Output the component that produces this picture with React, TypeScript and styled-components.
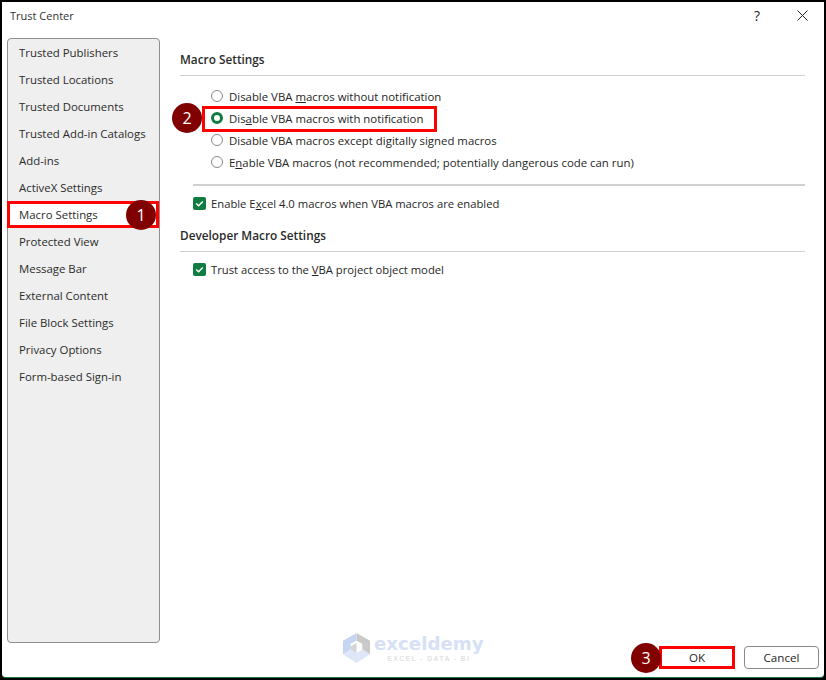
import React from "react";
import styled, { createGlobalStyle } from "styled-components";

const Global = createGlobalStyle`
  html, body { margin: 0; padding: 0; background: #fff; }
  *, *::before, *::after { box-sizing: border-box; }
`;

const Dialog = styled.div`
  position: relative;
  width: 826px;
  height: 680px;
  background: #000;
  padding: 2px;
  font-family: "Open Sans", "Noto Sans", sans-serif;
  font-size: 11.4px;
  color: #262626;
  overflow: hidden;
`;

const Window = styled.div`
  position: relative;
  width: 100%;
  height: 100%;
  background: #fff;
  border-bottom: 1px solid #107c41;
  border-radius: 0 0 4px 4px;
  display: flex;
  flex-direction: column;
`;

const TitleBar = styled.header`
  height: 36px;
  flex: none;
  display: flex;
  align-items: center;
  padding: 0 16px 9px 8px;
`;

const Title = styled.div`
  flex: 1;
  font-size: 11px;
  color: #333;
`;

const Help = styled.span`
  font-size: 14px;
  color: #222;
  margin-right: 37px;
  line-height: 16px;
`;

const Body = styled.div`
  flex: 1;
  display: flex;
  min-height: 0;
`;

const Sidebar = styled.nav`
  margin-left: 5px;
  width: 153px;
  height: 605px;
  flex: none;
  background: #efefef;
  border: 1px solid #8f8f8f;
  border-radius: 4px;
  display: flex;
  flex-direction: column;
`;

const NavItem = styled.div<{ $active?: boolean }>`
  height: 27px;
  flex: none;
  display: flex;
  align-items: center;
  padding-left: ${(p) => (p.$active ? "9px" : "11px")};
  color: #2b2b2b;
  white-space: nowrap;
  ${(p) => p.$active && "background: #fff; border: 3px solid #f00; margin: 0 0 0 -1px;"}
`;

const Main = styled.main`
  flex: 1;
  padding: 0 19px 0 20px;
  display: flex;
  flex-direction: column;
`;

const SectionHead = styled.div<{ $top: number; $height: number }>`
  height: ${(p) => p.$height}px;
  margin-top: ${(p) => p.$top}px;
  padding-top: 4px;
  font-weight: 600;
  font-size: 11.8px;
  line-height: 16px;
  color: #2b2b2b;
  border-bottom: 1px solid #d0d0d0;
`;

const RadioGroup = styled.div`
  margin: 10px 0 0 0;
  display: flex;
  flex-direction: column;
`;

const RadioRow = styled.div<{ $highlight?: boolean }>`
  position: relative;
  height: 22px;
  display: flex;
  align-items: center;
  gap: 6px;
  padding: 0 0 2px 31px;
  white-space: nowrap;
  ${(p) =>
    p.$highlight &&
    `&::before {
      content: "";
      position: absolute;
      left: 22px;
      top: -2px;
      width: 235px;
      height: 26px;
      border: 3px solid #f00;
    }`}
`;

const RadioDot = styled.span<{ $on?: boolean }>`
  width: 12px;
  height: 12px;
  flex: none;
  border-radius: 50%;
  background: #fff;
  border: ${(p) => (p.$on ? "3px solid #107c41" : "1px solid #8a8a8a")};
`;

const Divider = styled.div`
  height: 2px;
  margin: 10px 0 0 13px;
  background: #d0d0d0;
`;

const CheckRow = styled.div<{ $top: number }>`
  height: 14px;
  margin: ${(p) => p.$top}px 0 0 13px;
  display: flex;
  align-items: center;
  gap: 5px;
  font-size: 11.25px;
  white-space: nowrap;
`;

const CheckBox = styled.span`
  width: 13px;
  height: 13px;
  flex: none;
  border-radius: 2px;
  background: #107c41;
  display: flex;
  align-items: center;
  justify-content: center;
`;

const Footer = styled.footer`
  height: 32px;
  flex: none;
  display: flex;
  justify-content: flex-end;
  align-items: flex-start;
  gap: 9px;
  padding: 1px 5px 0 0;
`;

const Button = styled.button<{ $primary?: boolean }>`
  width: ${(p) => (p.$primary ? "76px" : "75px")};
  height: 23px;
  padding: 0;
  background: #fff;
  font-family: inherit;
  font-size: 11.6px;
  color: #262626;
  border-radius: ${(p) => (p.$primary ? "0" : "4px")};
  border: ${(p) => (p.$primary ? "3px solid #f00" : "1px solid #8a8a8a")};
`;

const Badge = styled.span<{ $x: number; $y: number }>`
  position: absolute;
  left: ${(p) => p.$x}px;
  top: ${(p) => p.$y}px;
  width: 30px;
  height: 30px;
  border-radius: 50%;
  background: #800000;
  color: #fff;
  font-size: 16px;
  display: flex;
  align-items: center;
  justify-content: center;
`;

const Watermark = styled.div`
  position: absolute;
  left: 342px;
  top: 633px;
  display: flex;
  align-items: flex-start;
  gap: 3px;
`;

const MarkText = styled.div`
  display: flex;
  flex-direction: column;
  align-items: center;
`;

const MarkName = styled.span`
  font-family: "DejaVu Sans", sans-serif;
  font-weight: 700;
  font-size: 18.2px;
  line-height: 22px;
  color: #d6e1f5;
`;

const MarkTag = styled.span`
  font-family: "Liberation Sans", sans-serif;
  font-weight: 700;
  font-size: 7px;
  line-height: 8px;
  letter-spacing: 1.3px;
  color: #e3e3e3;
`;

const nav = [
  "Trusted Publishers",
  "Trusted Locations",
  "Trusted Documents",
  "Trusted Add-in Catalogs",
  "Add-ins",
  "ActiveX Settings",
  "Macro Settings",
  "Protected View",
  "Message Bar",
  "External Content",
  "File Block Settings",
  "Privacy Options",
  "Form-based Sign-in",
];

const Check = () => (
  <svg width="9" height="9" viewBox="0 0 9 9" fill="none">
    <path d="M1.2 4.6 L3.5 6.8 L7.8 2.4" stroke="#fff" strokeWidth="1.4" />
  </svg>
);

const Close = () => (
  <svg width="11" height="11" viewBox="0 0 11 11" fill="none">
    <path d="M0.5 0.5 L10.5 10.5 M10.5 0.5 L0.5 10.5" stroke="#222" strokeWidth="1" />
  </svg>
);

const Logo = () => (
  <svg width="29" height="31" viewBox="0 0 30 32">
    <path d="M15 0 L29 8 L29 22 L21 17 L21 11 L15 8 Z" fill="#c9c9c9" />
    <path d="M15 0 L1 8 L1 22 L9 17 L9 11 L15 8 Z" fill="#c5d5f2" />
    <path d="M1 22 L15 31 L29 22 L21 17 L15 21 L9 17 Z" fill="#dde7f7" />
    <path d="M9 14 L15 10 L15 21 L9 17 Z" fill="#d5d5d5" />
  </svg>
);

export default function App() {
  return (
    <>
      <Global />
      <Dialog>
        <Window>
          <TitleBar>
            <Title>Trust Center</Title>
            <Help>?</Help>
            <Close />
          </TitleBar>
          <Body>
            <Sidebar>
              {nav.map((n) => (
                <NavItem key={n} $active={n === "Macro Settings"}>
                  {n}
                </NavItem>
              ))}
            </Sidebar>
            <Main>
              <SectionHead $top={9} $height={29}>Macro Settings</SectionHead>
              <RadioGroup>
                <RadioRow>
                  <RadioDot />
                  <span>Disable VBA <u>m</u>acros without notification</span>
                </RadioRow>
                <RadioRow $highlight>
                  <RadioDot $on />
                  <span>Dis<u>a</u>ble VBA macros with notification</span>
                </RadioRow>
                <RadioRow>
                  <RadioDot />
                  <span>Disable VBA macros except di<u>g</u>itally signed macros</span>
                </RadioRow>
                <RadioRow>
                  <RadioDot />
                  <span>E<u>n</u>able VBA macros (not recommended; potentially dangerous code can run)</span>
                </RadioRow>
              </RadioGroup>
              <Divider />
              <CheckRow $top={10}>
                <CheckBox><Check /></CheckBox>
                <span>Enable E<u>x</u>cel 4.0 macros when VBA macros are enabled</span>
              </CheckRow>
              <SectionHead $top={13} $height={29}>Developer Macro Settings</SectionHead>
              <CheckRow $top={10}>
                <CheckBox><Check /></CheckBox>
                <span>Trust access to the <u>V</u>BA project object model</span>
              </CheckRow>
            </Main>
          </Body>
          <Footer>
            <Button $primary>OK</Button>
            <Button>Cancel</Button>
          </Footer>
        </Window>
        <Watermark>
          <Logo />
          <MarkText>
            <MarkName>exceldemy</MarkName>
            <MarkTag>EXCEL - DATA - BI</MarkTag>
          </MarkText>
        </Watermark>
        <Badge $x={126} $y={200}>1</Badge>
        <Badge $x={172} $y={103}>2</Badge>
        <Badge $x={631} $y={643}>3</Badge>
      </Dialog>
    </>
  );
}
